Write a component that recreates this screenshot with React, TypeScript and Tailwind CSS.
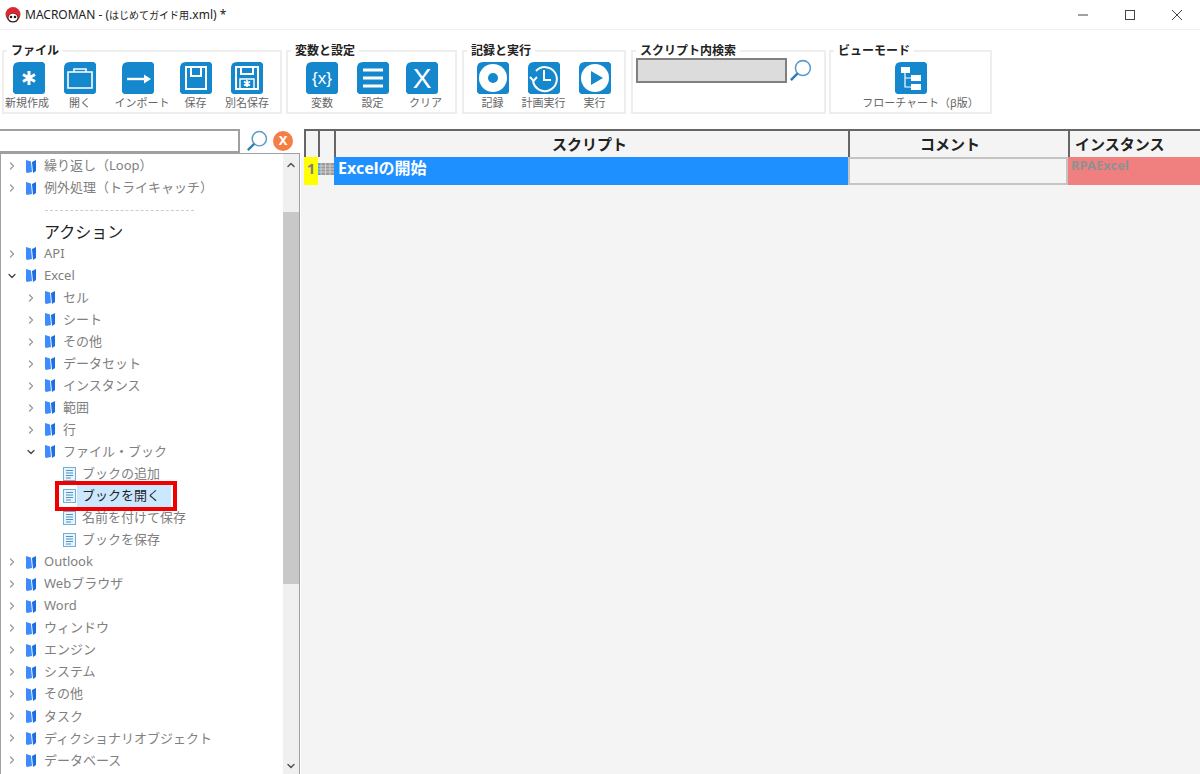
import type { ReactNode } from "react";
import { ChevronDown, ChevronRight, ChevronUp } from "lucide-react";

const jp = "[font-family:'Noto_Sans','Noto_Sans_CJK_JP',sans-serif]";

function BlueIcon({
  children,
  className,
}: {
  children: ReactNode;
  className?: string;
}) {
  return (
    <svg
      viewBox="0 0 32 32"
      className={`h-8 w-8 flex-none ${className ?? ""}`}
      aria-hidden="true"
    >
      <path d="M6 0H30L32 2V29Q32 32 29 32H2L0 30V6Q0 0 6 0Z" fill="#1487cd" />
      {children}
    </svg>
  );
}

const w = { fill: "none", stroke: "#fff", strokeWidth: 1.6 };

const icons: Record<string, ReactNode> = {
  new: (
    <path
      d="M16 9V23M10 12.500L22 19.500M22 12.500L10 19.500"
      fill="none"
      stroke="#fff"
      strokeWidth="3"
    />
  ),
  open: (
    <>
      <path d="M4 10H28V26H4Z" {...w} />
      <path d="M10 10V7H22V10" {...w} />
    </>
  ),
  import: (
    <>
      <path d="M5 17H23" stroke="#fff" strokeWidth="2.400" />
      <path d="M22 12.500L29 17L22 21.500Z" fill="#fff" />
    </>
  ),
  save: (
    <>
      <path d="M6 5H26V27H6Z" {...w} strokeWidth={2} />
      <path d="M11 5V14H21V5" {...w} strokeWidth={2} />
    </>
  ),
  saveAs: (
    <>
      <path d="M5 5H27V27H5Z" {...w} strokeWidth={2} />
      <path d="M10 5V12H22V5" {...w} strokeWidth={2} />
      <path d="M9 27V17H23V27" {...w} strokeWidth={1.4} />
      <path d="M16 18V25M13 19.500L19 23.500M19 19.500L13 23.500" {...w} strokeWidth={1.6} />
    </>
  ),
  vars: (
    <text
      x="16"
      y="22"
      textAnchor="middle"
      fill="#fff"
      fontSize="17"
      fontFamily="'Liberation Sans', sans-serif"
    >
      {"{x}"}
    </text>
  ),
  settings: (
    <path d="M6 8H26M6 16H26M6 24H26" fill="none" stroke="#fff" strokeWidth="3" />
  ),
  clear: (
    <text
      x="16"
      y="26"
      textAnchor="middle"
      fill="#fff"
      fontSize="28"
      fontFamily="'Liberation Sans', sans-serif"
    >
      X
    </text>
  ),
  record: (
    <>
      <circle cx="16" cy="16" r="14" fill="#fff" />
      <circle cx="16" cy="16" r="5" fill="#1487cd" />
    </>
  ),
  schedule: (
    <>
      <path d="M8 9A12 12 0 1 1 5 19" {...w} strokeWidth={2} />
      <path d="M2 15L5.500 19L9 15" {...w} strokeWidth={2} />
      <path d="M16 8V18H23" {...w} strokeWidth={2} />
    </>
  ),
  run: (
    <>
      <circle cx="16" cy="16" r="14" fill="#fff" />
      <path d="M12 9L24 16L12 23Z" fill="#1487cd" />
    </>
  ),
  flow: (
    <>
      <rect x="6" y="5" width="9" height="6" fill="#fff" />
      <rect x="16" y="13" width="10" height="6" fill="#fff" />
      <rect x="16" y="22" width="10" height="6" fill="#fff" />
      <path d="M10 11V25H16M10 16H16" {...w} strokeWidth={1.2} />
    </>
  ),
};

function ToolButton({
  icon,
  label,
  width,
  iconClass,
}: {
  icon: string;
  label: string;
  width: string;
  iconClass?: string;
}) {
  return (
    <div className={`flex flex-none flex-col items-center ${width}`}>
      <BlueIcon className={iconClass}>{icons[icon]}</BlueIcon>
      <span className="mt-[1px] whitespace-nowrap text-[11px] leading-[16px] text-[#666]">
        {label}
      </span>
    </div>
  );
}

function Group({
  title,
  width,
  className,
  children,
}: {
  title: string;
  width: string;
  className?: string;
  children: ReactNode;
}) {
  return (
    <fieldset
      className={`h-[70px] flex-none border-2 border-[#eeeeee] ${width} ${className ?? ""}`}
    >
      <legend className="ml-[3px] px-[4px] text-[12px] font-bold leading-[14px] text-[#222]">
        {title}
      </legend>
      {children}
    </fieldset>
  );
}

function SearchIcon({ className }: { className: string }) {
  return (
    <svg viewBox="0 0 24 24" className={className} aria-hidden="true">
      <circle cx="14.500" cy="9.500" r="7.800" fill="none" stroke="#5a9bc9" strokeWidth="1.600" />
      <path d="M9 15L2 22" stroke="#2f7db5" strokeWidth="2.600" />
    </svg>
  );
}

function Folder() {
  return (
    <svg viewBox="0 0 10 13" className="h-[13px] w-[10px] flex-none" aria-hidden="true">
      <path d="M0 0L5 1.500L6 12L1 13L0 12Z" fill="#3d8bff" />
      <path d="M6 2L10 0V11L7 13Z" fill="#1b6fe0" />
    </svg>
  );
}

function Doc() {
  return (
    <svg viewBox="0 0 13 14" className="h-[14px] w-[13px] flex-none" aria-hidden="true">
      <rect x="0.5" y="0.5" width="12" height="13" fill="#e8f4fb" stroke="#6fb0d8" />
      <path d="M3 3.500H10M3 6H10M3 8.500H10M3 11H8" stroke="#4a93c4" strokeWidth="1" />
    </svg>
  );
}

type TreeRow = {
  label: string;
  level?: 0 | 1 | 2;
  open?: boolean;
  selected?: boolean;
};

const topRows: TreeRow[] = [
  { label: "繰り返し（Loop）" },
  { label: "例外処理（トライキャッチ）" },
];

const actionRows: TreeRow[] = [
  { label: "API" },
  { label: "Excel", open: true },
  { label: "セル", level: 1 },
  { label: "シート", level: 1 },
  { label: "その他", level: 1 },
  { label: "データセット", level: 1 },
  { label: "インスタンス", level: 1 },
  { label: "範囲", level: 1 },
  { label: "行", level: 1 },
  { label: "ファイル・ブック", level: 1, open: true },
  { label: "ブックの追加", level: 2 },
  { label: "ブックを開く", level: 2, selected: true },
  { label: "名前を付けて保存", level: 2 },
  { label: "ブックを保存", level: 2 },
  { label: "Outlook" },
  { label: "Webブラウザ" },
  { label: "Word" },
  { label: "ウィンドウ" },
  { label: "エンジン" },
  { label: "システム" },
  { label: "その他" },
  { label: "タスク" },
  { label: "ディクショナリオブジェクト" },
  { label: "データベース" },
];

function Row({ row }: { row: TreeRow }) {
  const level = row.level ?? 0;
  if (level === 2) {
    return (
      <div className="relative flex h-[22.04px] items-center pl-[62px] text-[13px] text-[#808080]">
        <Doc />
        <span
          className={
            row.selected
              ? "ml-[1px] flex h-[22px] w-[94px] items-center bg-[#cce8ff] pl-[5px] text-[#222]"
              : "ml-[6px]"
          }
        >
          {row.label}
        </span>
        {row.selected && (
          <div className="absolute left-[54px] top-[-4px] h-[30px] w-[122px] border-[4px] border-[#f00000]" />
        )}
      </div>
    );
  }
  return (
    <div
      className={`flex h-[22.04px] items-center text-[13px] text-[#808080] ${
        level === 1 ? "pl-[24px]" : "pl-[5px]"
      }`}
    >
      {row.open ? (
        <ChevronDown className="h-[12px] w-[12px] flex-none text-[#444]" strokeWidth={2.5} />
      ) : (
        <ChevronRight className="h-[12px] w-[12px] flex-none text-[#999]" strokeWidth={2.5} />
      )}
      <span className="ml-[8px] flex">
        <Folder />
      </span>
      <span className="ml-[8px] whitespace-nowrap">{row.label}</span>
    </div>
  );
}

function TitleBar() {
  return (
    <div className="flex h-[30px] items-center border-b border-[#f0f0f0] bg-white">
      <svg viewBox="0 0 16 16" className="ml-[5px] h-[16px] w-[16px]" aria-hidden="true">
        <circle cx="8" cy="7.500" r="7.500" fill="#d9282f" />
        <ellipse cx="8" cy="11" rx="5.500" ry="4.500" fill="#222" />
        <ellipse cx="8" cy="10.500" rx="4.500" ry="3.800" fill="#fff" />
        <circle cx="6" cy="10" r="1.300" fill="#222" />
        <circle cx="10" cy="10" r="1.300" fill="#222" />
      </svg>
      <span className="ml-[4px] text-[12px] text-[#222]">
        MACROMAN - (<span className="text-[10px]">はじめてガイド用</span>.xml) *
      </span>
      <div className="ml-auto flex">
        <div className="flex h-[29px] w-[47px] items-center justify-center">
          <svg viewBox="0 0 10 10" className="h-[10px] w-[10px]" aria-hidden="true">
            <path d="M0 5H10" stroke="#444" />
          </svg>
        </div>
        <div className="flex h-[29px] w-[47px] items-center justify-center">
          <svg viewBox="0 0 10 10" className="h-[10px] w-[10px]" aria-hidden="true">
            <rect x="0.5" y="0.5" width="9" height="9" fill="none" stroke="#444" />
          </svg>
        </div>
        <div className="flex h-[29px] w-[47px] items-center justify-center">
          <svg viewBox="0 0 10 10" className="h-[10px] w-[10px]" aria-hidden="true">
            <path d="M0 0L10 10M10 0L0 10" stroke="#444" />
          </svg>
        </div>
      </div>
    </div>
  );
}

function Toolbar() {
  return (
    <div className="flex h-[98px] gap-[4px] bg-white pl-[2px] pt-[14px]">
      <Group title="ファイル" width="w-[280px]">
        <div className="flex pt-[4px]">
          <ToolButton icon="new" label="新規作成" width="w-[46px]" iconClass="translate-x-[2px]" />
          <ToolButton icon="open" label="開く" width="w-[60px]" />
          <ToolButton icon="import" label="インポート" width="w-[64px]" iconClass="-translate-x-[4px]" />
          <ToolButton icon="save" label="保存" width="w-[43px]" />
          <ToolButton icon="saveAs" label="別名保存" width="w-[60px]" />
        </div>
      </Group>
      <Group title="変数と設定" width="w-[171px]">
        <div className="flex pl-[9px] pt-[4px]">
          <ToolButton icon="vars" label="変数" width="w-[50px]" />
          <ToolButton icon="settings" label="設定" width="w-[51px]" />
          <ToolButton icon="clear" label="クリア" width="w-[55px]" iconClass="-translate-x-[4px]" />
        </div>
      </Group>
      <Group title="記録と実行" width="w-[164px]" className="ml-[1px]">
        <div className="flex pl-[3px] pt-[4px]">
          <ToolButton icon="record" label="記録" width="w-[51px]" />
          <ToolButton icon="schedule" label="計画実行" width="w-[51px]" />
          <ToolButton icon="run" label="実行" width="w-[51px]" />
        </div>
      </Group>
      <Group title="スクリプト内検索" width="w-[195px]" className="ml-[1px]">
        <div className="flex items-center pl-[3px]">
          <div className="h-[25px] w-[151px] border-2 border-[#808080] bg-[#dcdcdc]" />
          <SearchIcon className="ml-[2px] h-[23px] w-[23px]" />
        </div>
      </Group>
      <Group title="ビューモード" width="w-[163px]" className="ml-[-1px]">
        <div className="flex flex-col items-center pt-[4px]">
          <BlueIcon>{icons.flow}</BlueIcon>
          <span className="ml-[20px] mt-[1px] whitespace-nowrap text-[11px] leading-[16px] text-[#666]">
            フローチャート（β版）
          </span>
        </div>
      </Group>
    </div>
  );
}

function Scrollbar() {
  return (
    <div className="flex w-[16px] flex-none flex-col bg-[#f0f0f0]">
      <div className="flex h-[58px] flex-none justify-center pt-[5px]">
        <ChevronUp className="h-[12px] w-[12px] text-[#555]" strokeWidth={3} />
      </div>
      <div className="h-[372px] flex-none bg-[#c8c8c8]" />
      <div className="mt-auto flex h-[14px] justify-center">
        <ChevronDown className="h-[12px] w-[12px] text-[#555]" strokeWidth={3} />
      </div>
    </div>
  );
}

function TreePanel() {
  return (
    <div className="flex w-[300px] flex-none flex-col">
      <div className="flex h-[24px] flex-none items-center">
        <div className="h-[24px] w-[240px] flex-none border-2 border-l-0 border-[#a0a0a0] bg-white" />
        <SearchIcon className="ml-[6px] h-[22px] w-[22px]" />
        <div className="ml-[5px] flex h-[20px] w-[20px] items-center justify-center rounded-full bg-[#f47f45] text-[13px] font-bold text-white">
          X
        </div>
      </div>
      <div className="flex h-[621px] border-x border-t border-[#a0a0a0]">
        <div className="flex-1 pt-[1px]">
          {topRows.map((r) => (
            <Row key={r.label} row={r} />
          ))}
          <div className="flex h-[22.04px] items-center pl-[44px]">
            <div className="w-[149px] border-t border-dashed border-[#cccccc]" />
          </div>
          <div className="flex h-[21.5px] items-center pl-[43px] pt-[1px] text-[16px] text-[#222]">
            アクション
          </div>
          {actionRows.map((r) => (
            <Row key={r.label} row={r} />
          ))}
        </div>
        <Scrollbar />
      </div>
    </div>
  );
}

function ScriptTable() {
  const head =
    "flex h-[28px] flex-none items-center border-l-2 border-t-2 border-[#666] bg-[#f4f4f4] text-[15px] font-bold text-[#222]";
  return (
    <div className="flex min-w-0 flex-1 flex-col pl-[1px]">
      <div className="flex bg-white pl-[3px]">
        <div className={`${head} w-[14px]`} />
        <div className={`${head} w-[16px]`} />
        <div className={`${head} w-[514px] justify-center pr-[5px]`}>スクリプト</div>
        <div className={`${head} w-[220px] justify-center pr-[18px]`}>コメント</div>
        <div className={`${head} w-[132px] pl-[5px]`}>インスタンス</div>
      </div>
      <div className="flex-1 bg-[#f4f4f4] pl-[3px]">
        <div className="flex h-[28px]">
          <div className="flex h-[28px] w-[14px] flex-none items-start justify-center bg-[#ffff00] text-[15px] font-bold leading-[23px] text-[#808080]">
            1
          </div>
          <div className="flex h-[24px] w-[16px] flex-none items-center">
            <svg viewBox="0 0 16 12" className="h-[12px] w-[16px]" aria-hidden="true">
              <rect width="16" height="12" fill="#9a9a9a" />
              <rect width="3" height="12" fill="#5a9bd0" />
              <path d="M0 3H16M0 6H16M0 9H16M3 0V12M7.500 0V12M12 0V12" stroke="#e4e4e4" strokeWidth="0.7" />
            </svg>
          </div>
          <div className="w-[514px] flex-none bg-[#1e90ff] pl-[4px] text-[16px] font-bold leading-[23px] text-white">
            Excelの開始
          </div>
          <div className="w-[220px] flex-none border-2 border-[#c4c4c4]" />
          <div className="w-[132px] flex-none bg-[#f08080] pl-[3px] text-[13px] font-bold leading-[17px] text-[#909090]">
            RPAExcel
          </div>
        </div>
      </div>
    </div>
  );
}

export default function App() {
  return (
    <div className={`h-[774px] w-[1200px] overflow-hidden bg-white ${jp}`}>
      <TitleBar />
      <Toolbar />
      <div className="flex h-[646px] pt-[1px]">
        <TreePanel />
        <ScriptTable />
      </div>
    </div>
  );
}
